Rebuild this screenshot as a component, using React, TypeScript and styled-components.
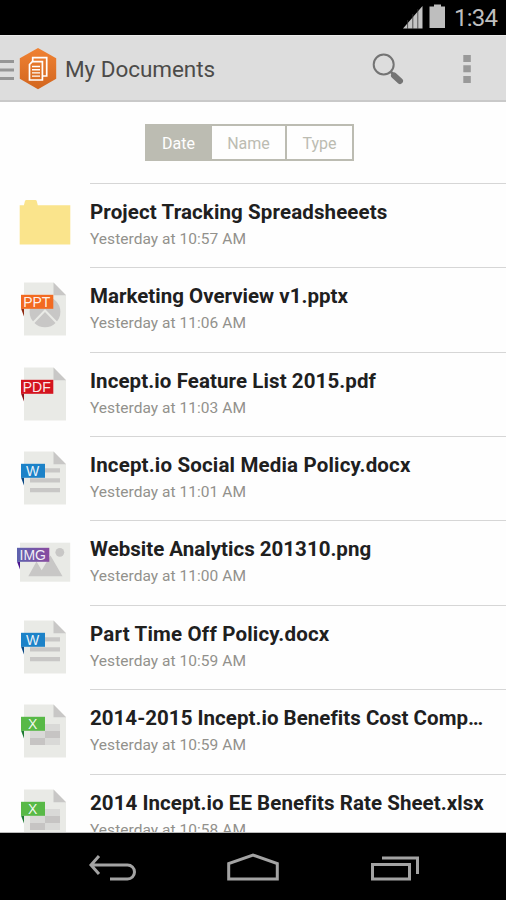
import styled, { createGlobalStyle } from "styled-components";

const GlobalStyle = createGlobalStyle`
  * {
    box-sizing: border-box;
  }
  body {
    margin: 0;
    background: #fff;
    font-family: Roboto, "Liberation Sans", sans-serif;
  }
`;

const Phone = styled.div`
  width: 506px;
  height: 900px;
  display: flex;
  flex-direction: column;
  overflow: hidden;
  background: #fefefe;
`;
const StatusBar = styled.div`
  height: 35px;
  flex: none;
  display: flex;
  justify-content: flex-end;
  align-items: flex-start;
  background: #000;
`;
const Clock = styled.span`
  width: 53px;
  padding: 4px 0 0 1px;
  font-size: 24px;
  line-height: 29px;
  letter-spacing: -0.8px;
  color: #bebebe;
`;
const ActionBar = styled.header`
  height: 67px;
  flex: none;
  display: flex;
  align-items: center;
  background: #ddd;
  border-top: 1px solid #e9e9e9;
  border-bottom: 2px solid #c9c9c9;
`;
const ScreenTitle = styled.h1`
  flex: 1;
  margin: 0;
  padding: 2px 0 0 7px;
  font-size: 22.5px;
  font-weight: 400;
  line-height: 28px;
  letter-spacing: -0.05px;
  color: #4c4b49;
`;
const Content = styled.main`
  flex: 1;
  min-height: 0;
  overflow: hidden;
  border-bottom: 1px solid #bbb;
`;
const SortBar = styled.div`
  display: flex;
  height: 81px;
  padding: 22px 0 0 145px;
`;
const Segments = styled.div`
  display: flex;
  width: 209px;
  height: 37px;
  border: 2px solid #bcbcb2;
`;
const Segment = styled.span<{ $width: number; $active?: boolean }>`
  width: ${(props) => props.$width}px;
  display: flex;
  align-items: center;
  justify-content: center;
  padding-top: 1px;
  padding-right: ${(props) => (props.$active ? 2 : 0)}px;
  font-size: 16px;
  color: ${(props) => (props.$active ? "#fff" : "#bcbcb2")};
  background: ${(props) => (props.$active ? "#bcbcb2" : "transparent")};
  & + & + & {
    border-left: 2px solid #bcbcb2;
  }
`;
const Row = styled.div`
  display: flex;
  height: 84.36px;
`;
const RowText = styled.div`
  flex: 1;
  min-width: 0;
  padding: 14px 22px 0 0;
  border-top: 1px solid #d6d6d6;
`;
const FileName = styled.div<{ $spacing: number }>`
  font-size: 20.5px;
  font-weight: 700;
  line-height: 28px;
  letter-spacing: ${(props) => props.$spacing}px;
  white-space: nowrap;
  color: #20201e;
`;
const Modified = styled.div`
  padding-top: 2px;
  font-size: 15.5px;
  line-height: 22px;
  letter-spacing: 0.04px;
  white-space: nowrap;
  color: #92918c;
`;
const NavBar = styled.nav`
  height: 67px;
  flex: none;
  display: flex;
  background: #000;
`;

const iconFont = '"Liberation Sans", Arial, sans-serif';

type Kind = "folder" | "ppt" | "pdf" | "doc" | "img" | "xls";

interface IFile {
  name: string;
  time: string;
  kind: Kind;
  spacing: number;
}

const files: IFile[] = [
  { name: "Project Tracking Spreadsheeets", time: "10:57 AM", kind: "folder", spacing: 0.12 },
  { name: "Marketing Overview v1.pptx", time: "11:06 AM", kind: "ppt", spacing: 0.01 },
  { name: "Incept.io Feature List 2015.pdf", time: "11:03 AM", kind: "pdf", spacing: 0.09 },
  { name: "Incept.io Social Media Policy.docx", time: "11:01 AM", kind: "doc", spacing: 0.17 },
  { name: "Website Analytics 201310.png", time: "11:00 AM", kind: "img", spacing: 0.01 },
  { name: "Part Time Off Policy.docx", time: "10:59 AM", kind: "doc", spacing: 0.19 },
  { name: "2014-2015 Incept.io Benefits Cost Comp…", time: "10:59 AM", kind: "xls", spacing: 0.03 },
  { name: "2014 Incept.io EE Benefits Rate Sheet.xlsx", time: "10:58 AM", kind: "xls", spacing: 0.06 },
];

interface IRibbon {
  label: string;
  fill: string;
  dark: string;
  width: number;
}

const ribbons: Record<Exclude<Kind, "folder">, IRibbon> = {
  ppt: { label: "PPT", fill: "#f26a21", dark: "#8f2b12", width: 32.3 },
  pdf: { label: "PDF", fill: "#d4141f", dark: "#8a1219", width: 32.3 },
  doc: { label: "W", fill: "#1c82c8", dark: "#0c4a85", width: 24 },
  img: { label: "IMG", fill: "url(#violet)", dark: "#4b1590", width: 32.3 },
  xls: { label: "X", fill: "#58b947", dark: "#1d7a34", width: 24 },
};

function Ribbon({ kind }: { kind: Exclude<Kind, "folder"> }) {
  const { label, fill, dark, width } = ribbons[kind];
  const x = kind === "img" ? 17 : 21;
  return (
    <g>
      <path d={`M${x} 41.5h3v8z`} fill={dark} />
      <rect x={x} y="27.8" width={width} height="14" fill={fill} />
      <text
        x={x + width / 2 - 0.4}
        y="39.6"
        textAnchor="middle"
        fontFamily={iconFont}
        fontSize="14"
        fill="#fff"
        fillOpacity="0.92"
      >
        {label}
      </text>
    </g>
  );
}

function FileIcon({ kind }: { kind: Kind }) {
  if (kind === "folder") {
    return (
      <svg width="90" height="84" viewBox="0 0 90 84">
        <path d="M19.7 61.6V22.3h4.2l1-4q.3-1.2 1.5-1.2h8.9q1.200 0 1.500 1.200l1 4h32.500v39.300z" fill="#fae48c" />
      </svg>
    );
  }
  return (
    <svg width="90" height="84" viewBox="0 0 90 84">
      {kind === "img" ? (
        <g>
          <defs>
            <linearGradient id="violet" x1="0" y1="0" x2="1" y2="0">
              <stop offset="0" stopColor="#5d62ae" />
              <stop offset="1" stopColor="#8a4ba0" />
            </linearGradient>
          </defs>
          <rect x="20" y="22.700" width="50.200" height="39" fill="#e9eae6" />
          <circle cx="59.800" cy="32.300" r="4.400" fill="#c8c7c6" />
          <path d="M28.300 56.300L36.500 41.500l5.200 8.800L50.500 35.500l12 20.800z" fill="#c8c7c6" />
        </g>
      ) : (
        <g>
          <path d="M24 15.500h29.500L66 28v40.500H24z" fill="#e9eae6" />
          <path d="M53.500 15.500L66 28.200H53.500z" fill="#c8c7c6" />
        </g>
      )}
      {kind === "ppt" && (
        <g>
          <circle cx="45" cy="44.800" r="15.400" fill="#c8c7c6" />
          <path d="M32.500 56.500L45 43.500l12.500 13" stroke="#e9eae6" strokeWidth="2" fill="none" />
        </g>
      )}
      {kind === "doc" && (
        <path d="M30 32.300h30v4.200H30zM30 42.200h30v4.200H30zM30 52.100h30v4.200H30z" fill="#c8c7c6" />
      )}
      {kind === "xls" && (
        <g>
          <path d="M30 35h30v21H30z" fill="#d9d9d7" />
          <path d="M45 42h15v7H45zM30 49h15v7H30z" fill="#c6c4c3" />
        </g>
      )}
      <Ribbon kind={kind} />
    </svg>
  );
}

function StatusIcons() {
  return (
    <svg width="50" height="35" viewBox="0 0 50 35">
      <path d="M0 28.500L19.500 6v22.500z" fill="#c4c4c4" />
      <path d="M4.600 20v9M9.800 14v15M14.800 9v20" stroke="#333" strokeWidth="0.800" />
      <path d="M31 4.500h7v2h4V28H26.500V6.500H31z" fill="#bebebe" />
    </svg>
  );
}

function Logo() {
  return (
    <svg width="58" height="64" viewBox="0 0 58 64">
      <defs>
        <linearGradient id="hex" x1="0" y1="0" x2="0" y2="1">
          <stop offset="0" stopColor="#f08233" />
          <stop offset="1" stopColor="#d2661f" />
        </linearGradient>
      </defs>
      <path d="M0 25.500h14M0 34h14M0 42.500h14" stroke="#959595" strokeWidth="3" />
      <path d="M38 12l18.200 10.300v20.400L38 53.300 19.800 42.700V22.300z" fill="url(#hex)" />
      <path d="M32.700 25v-3.300h14V40H43" fill="none" stroke="#fff" strokeWidth="1.700" />
      <path d="M32.300 25.700H42.400V44H29.500V28.500z" fill="none" stroke="#fff" strokeWidth="1.700" />
      <path d="M32 30.500h8M32 33.700h8M32 36.900h8M32 40.100h8" stroke="#fff" strokeWidth="1.400" />
    </svg>
  );
}

function Actions() {
  return (
    <svg width="136" height="64" viewBox="0 0 136 64">
      <circle cx="13.700" cy="28.500" r="10" fill="none" stroke="#747474" strokeWidth="2" />
      <path d="M20.500 35.500l3 3" stroke="#747474" strokeWidth="2.500" />
      <path d="M24 39.500l6 5.500" stroke="#747474" strokeWidth="6" strokeLinecap="round" />
      <path d="M93.300 19h7.500v7h-7.500zM93.300 29.200h7.500v7h-7.500zM93.300 40h7.500v7h-7.500z" fill="#999" />
    </svg>
  );
}

function NavIcons() {
  return (
    <svg width="506" height="67" viewBox="0 0 506 67" fill="none" stroke="#a3a3a3" strokeWidth="3">
      <path d="M99 23l-8 9 8 9M91 32h36.500a7 7 0 0 1 0 14H110" />
      <path d="M228.700 46V30.500L253 22l24.300 8.500V46z" />
      <path d="M372.500 31.500h37v14.500h-37zM382 25h35.500v16" />
    </svg>
  );
}

function App() {
  return (
    <Phone>
      <GlobalStyle />
      <StatusBar>
        <StatusIcons />
        <Clock>1:34</Clock>
      </StatusBar>
      <ActionBar>
        <Logo />
        <ScreenTitle>My Documents</ScreenTitle>
        <Actions />
      </ActionBar>
      <Content>
        <SortBar>
          <Segments>
            <Segment $width={65} $active>
              Date
            </Segment>
            <Segment $width={73}>Name</Segment>
            <Segment $width={67}>Type</Segment>
          </Segments>
        </SortBar>
        {files.map((file) => (
          <Row key={file.name}>
            <FileIcon kind={file.kind} />
            <RowText>
              <FileName $spacing={file.spacing}>{file.name}</FileName>
              <Modified>Yesterday at {file.time}</Modified>
            </RowText>
          </Row>
        ))}
      </Content>
      <NavBar>
        <NavIcons />
      </NavBar>
    </Phone>
  );
}

export default App;
